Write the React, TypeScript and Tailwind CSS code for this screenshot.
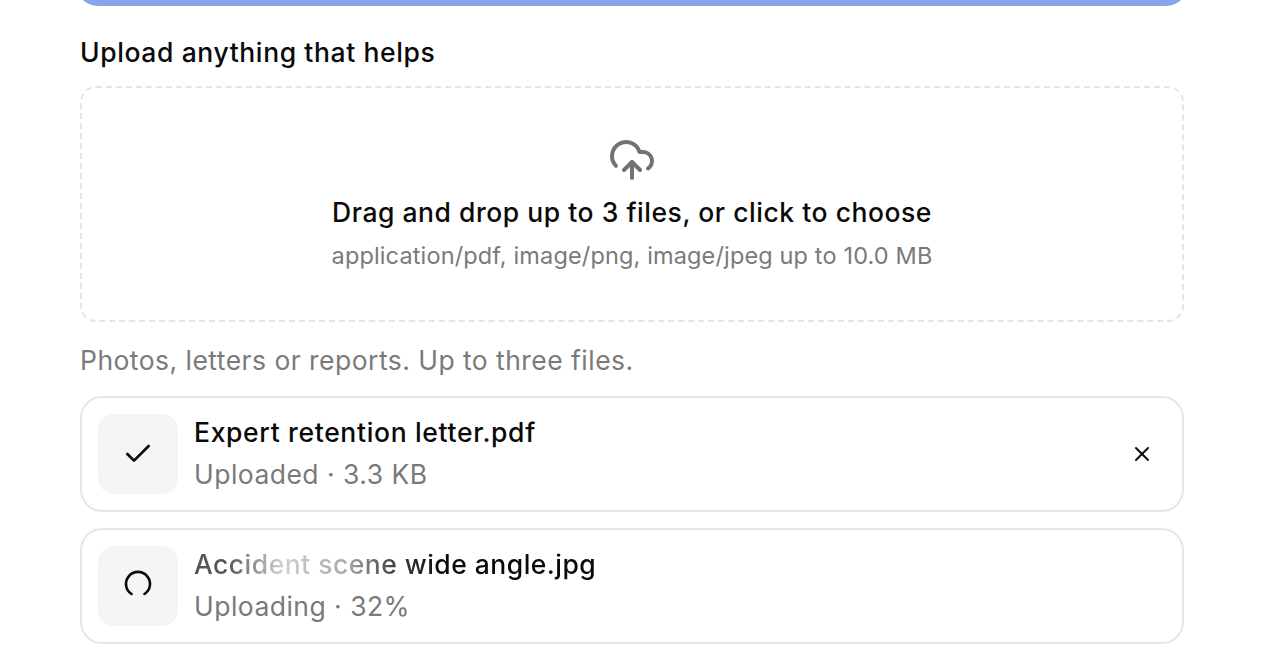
import { Check, CloudUpload, X } from 'lucide-react';

export default function App() {
  return (
    <div className="h-[658px] overflow-hidden bg-white px-[80px] font-['Inter',sans-serif] text-[#0a0a0a]">
      {/* Submit button, scrolled off the top */}
      <div className="-mx-[4px] h-[6px] overflow-hidden">
        <div className="-mt-[42px] h-[48px] rounded-[22px] bg-[#8aa4ec]" />
      </div>

      <h2 className="mt-[29px] text-[26.5px] leading-[34px] font-medium tracking-[0.6px]">Upload anything that helps</h2>

      {/* Drop zone */}
      <div className="mt-[17px] flex h-[236px] flex-col items-center rounded-[16px] border-2 border-dashed border-[#e5e5e5] pt-[48px]">
        <CloudUpload className="h-[48px] w-[48px] text-[#737373]" strokeWidth={2} />
        <p className="mt-[8px] text-[26.5px] leading-[40px] font-medium tracking-[0.53px]">Drag and drop up to 3 files, or click to choose</p>
        <p className="mt-[7px] text-[23.5px] leading-[34px] tracking-[0.14px] text-[#7a7a7a]">application/pdf, image/png, image/jpeg up to 10.0 MB</p>
      </div>

      <p className="mt-[19px] text-[26.5px] leading-[38px] tracking-[0.46px] text-[#7a7a7a]">Photos, letters or reports. Up to three files.</p>

      {/* File list */}
      <div className="mt-[17px] flex flex-col gap-[16px]">
        <div className="flex h-[116px] items-center rounded-[22px] border-2 border-[#e5e5e5] px-[16px]">
          <div className="flex h-[80px] w-[80px] shrink-0 items-center justify-center rounded-[16px] bg-[#f5f5f5]">
            <Check className="h-[32px] w-[32px]" strokeWidth={2} />
          </div>
          <div className="ml-[16px] flex-1 pb-[2px]">
            <p className="text-[26.5px] leading-[40px] font-medium tracking-[0.66px]">Expert retention letter.pdf</p>
            <p className="mt-[2px] text-[26.5px] leading-[40px] tracking-[0.47px] text-[#7a7a7a]">Uploaded · 3.3 KB</p>
          </div>
          <button className="mr-[8px] flex h-[32px] w-[32px] items-center justify-center">
            <X className="h-[24px] w-[24px]" strokeWidth={2} />
          </button>
        </div>

        <div className="flex h-[116px] items-center rounded-[22px] border-2 border-[#e5e5e5] px-[16px]">
          <div className="flex h-[80px] w-[80px] shrink-0 items-center justify-center rounded-[16px] bg-[#f5f5f5]">
            <svg className="h-[32px] w-[32px]" viewBox="0 0 32 32" fill="none" stroke="currentColor" strokeWidth="2.6" strokeLinecap="round">
              <path d="M9.5 24 A12 12 0 1 1 22.5 24" />
            </svg>
          </div>
          <div className="ml-[16px] flex-1 pb-[2px]">
            <p className="w-fit bg-[linear-gradient(90deg,#555555_0%,#555555_8%,#d0d0d0_22%,#a8a8a8_38%,#404040_50%,#0a0a0a_62%,#0a0a0a_100%)] bg-clip-text text-[26.5px] leading-[40px] font-medium tracking-[0.48px] text-transparent">
              Accident scene wide angle.jpg
            </p>
            <p className="mt-[2px] text-[26.5px] leading-[40px] tracking-[0.47px] text-[#7a7a7a]">Uploading · 32%</p>
          </div>
        </div>
      </div>
    </div>
  );
}
